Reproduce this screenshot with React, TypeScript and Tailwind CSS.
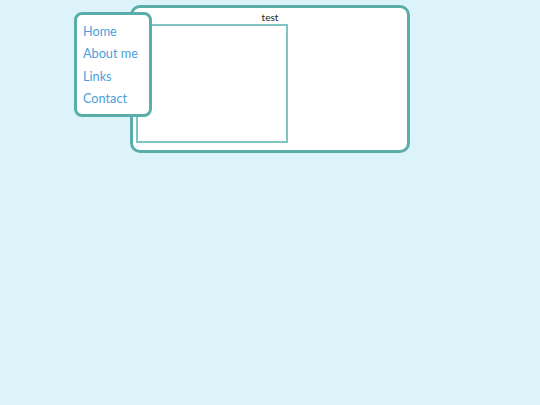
const links = ["Home", "About me", "Links", "Contact"];

export default function App() {
  return (
    <div className="relative min-h-screen bg-[#dcf3fa] pt-[5px] font-['Lato',sans-serif]">
      <div className="ml-[130px] flex h-[148px] w-[280px] flex-col rounded-[10px] border-[3px] border-[#5aaea9] bg-white px-[3px]">
        <p className="h-[16px] pt-[3px] text-center text-[10px] leading-[13px] text-[#222]">test</p>
        <div className="h-[119px] w-[152px] border-2 border-[#7ec5c4]" />
      </div>

      <nav className="absolute left-[74px] top-[12px] flex h-[105px] w-[78px] flex-col rounded-[8px] border-[3px] border-[#5aaea9] bg-white px-[6px] py-[5px]">
        {links.map((l) => (
          <a key={l} href="#" className="text-[12.7px] leading-[22.4px] text-[#4a9fdb]">
            {l}
          </a>
        ))}
      </nav>
    </div>
  );
}
